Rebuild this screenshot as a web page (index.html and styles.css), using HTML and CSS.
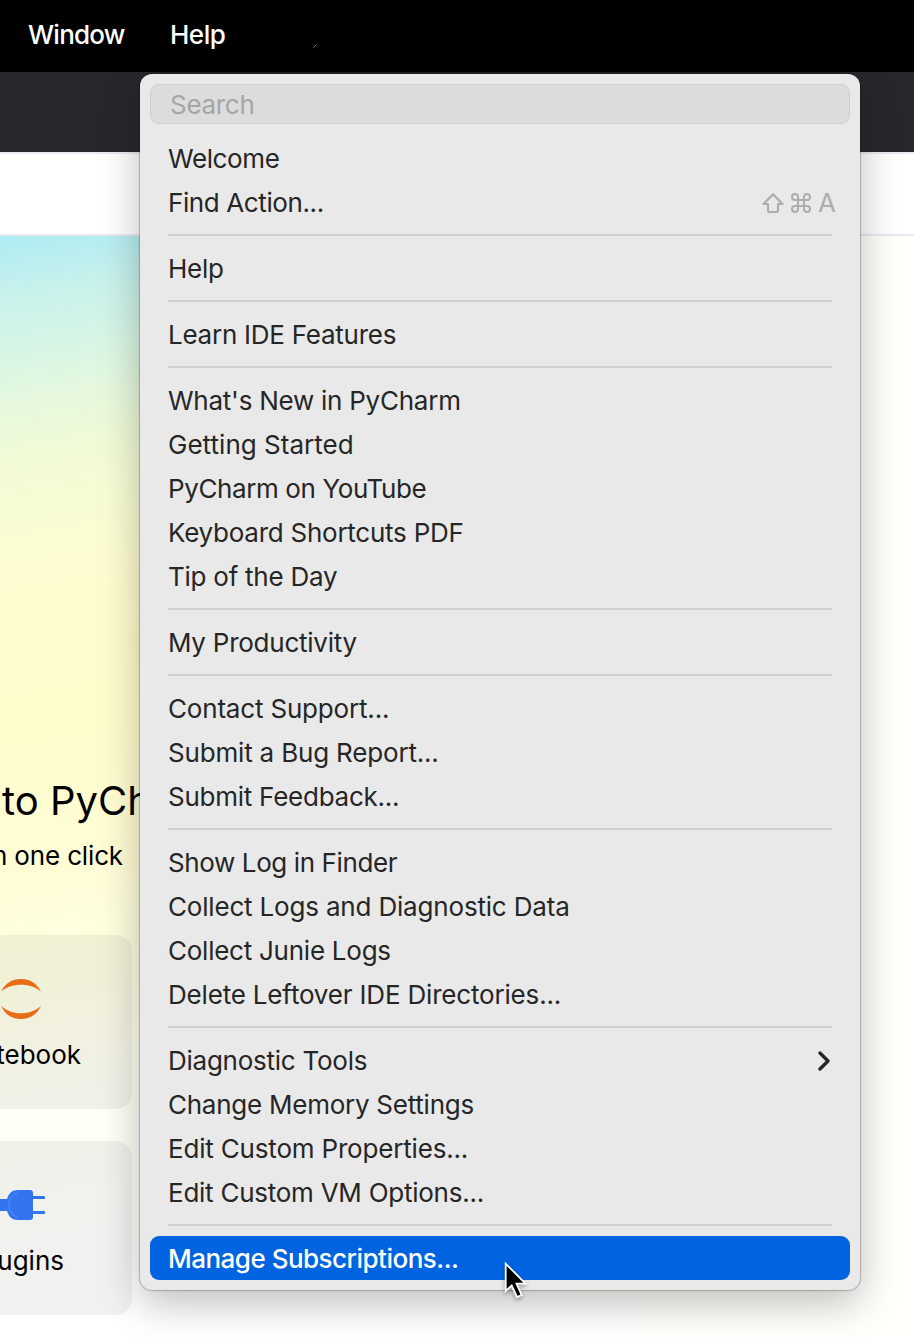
FILE: index.html
```html
<!DOCTYPE html>
<html lang="en">
<head>
<meta charset="utf-8">
<title>PyCharm Help menu</title>
<link rel="stylesheet" href="styles.css">
</head>
<body>
<div class="desktop">
  <header class="menubar">
    <span class="menubar-item window-item">Window</span>
    <span class="menubar-item">Help</span>
    <svg class="speck" width="4" height="4" viewBox="0 0 4 4"><path d="M.5 3.5l3-3" stroke="#999" stroke-width=".8"/></svg>
  </header>
  <div class="titlebar"></div>
  <div class="toolbar"></div>
  <main class="welcome">
    <h1 class="headline">to PyCh</h1>
    <p class="subline">n one click</p>
    <section class="card notebook">
      <svg class="jupyter" width="42" height="42" viewBox="0 0 42 42" fill="#e86c14"><path d="M1 13.700C5 5.500 12 1 21 1s16 4.500 20 12.700C36 9 29 6.700 21 6.700S6 9 1 13.700z"/><path d="M1 27.700C6 32.500 13 35.300 21 35.300S36 32.500 41 27.700C37 36.500 30 41 21 41S5 36.500 1 27.700z"/></svg>
      <span class="card-label">tebook</span>
    </section>
    <section class="card plugins">
      <svg class="plug" width="45" height="30" viewBox="0 0 45 30"><path fill="#3574f0" d="M0 9h7C9 3 12 0 18 0h12c2 0 3 1 3 3v3h10.700a1.300 1.300 0 0 1 0 3H33v12h10.700a1.300 1.300 0 0 1 0 3H33v3c0 2-1 3-3 3H18C12 30 9 27 7 21H0z"/><path fill="none" stroke="#6f9cf5" stroke-width=".6" d="M17.500 3C6 6 6 24 17.500 27"/></svg>
      <span class="card-label">ugins</span>
    </section>
  </main>
  <nav class="menu">
    <div class="search">Search</div>
    <div class="item tight">Welcome</div>
    <div class="item tight"><span>Find Action...</span>
      <span class="keys">
        <svg width="22" height="20" viewBox="0 0 22 20"><path d="M11 1.300L20.500 11H16v6.500q0 1.500-1.500 1.500h-7Q6 19 6 17.500V11H1.500z" fill="none" stroke="#adadad" stroke-width="2.200" stroke-linejoin="round"/></svg>
        <svg width="20" height="20" viewBox="0 0 20 20"><path d="M7 7V4a3 3 0 1 0-3 3h12a3 3 0 1 0-3-3v12a3 3 0 1 0 3-3H4a3 3 0 1 0 3 3z" fill="none" stroke="#adadad" stroke-width="2"/></svg>
        <span class="key-a">A</span>
      </span>
    </div>
    <hr class="rule">
    <div class="item">Help</div>
    <hr class="rule">
    <div class="item">Learn IDE Features</div>
    <hr class="rule">
    <div class="item">What's New in PyCharm</div>
    <div class="item loose">Getting Started</div>
    <div class="item tight">PyCharm on YouTube</div>
    <div class="item">Keyboard Shortcuts PDF</div>
    <div class="item">Tip of the Day</div>
    <hr class="rule">
    <div class="item">My Productivity</div>
    <hr class="rule">
    <div class="item wide">Contact Support...</div>
    <div class="item wide">Submit a Bug Report...</div>
    <div class="item">Submit Feedback...</div>
    <hr class="rule">
    <div class="item tight">Show Log in Finder</div>
    <div class="item wide">Collect Logs and Diagnostic Data</div>
    <div class="item">Collect Junie Logs</div>
    <div class="item wide">Delete Leftover IDE Directories...</div>
    <hr class="rule">
    <div class="item"><span>Diagnostic Tools</span>
      <svg class="chevron" width="12" height="20" viewBox="0 0 12 20"><path d="M2 2l8 8-8 8" fill="none" stroke="#262626" stroke-width="3.300" stroke-linecap="round" stroke-linejoin="round"/></svg>
    </div>
    <div class="item">Change Memory Settings</div>
    <div class="item wide">Edit Custom Properties...</div>
    <div class="item">Edit Custom VM Options...</div>
    <hr class="rule">
    <div class="item selected">Manage Subscriptions...</div>
  </nav>
  <svg class="cursor" width="30" height="44" viewBox="0 0 30 44"><path d="M4.700 3.700v27.300l6-5.500 5.300 11.500 4.700-2-5.200-11.300h9z" fill="#000" stroke="#fff" stroke-width="1.800"/></svg>
</div>
</body>
</html>
```
FILE: styles.css
```css
* { box-sizing: border-box; }
body { margin: 0; font-family: Inter, "Liberation Sans", sans-serif; font-size: 26px; }
.desktop { position: relative; width: 914px; height: 1338px; overflow: hidden; background: #fff; }
.menubar { display: flex; height: 72px; padding-left: 28px; background: #000; color: #fff; font-weight: 500; line-height: 70px; letter-spacing: -.5px; }
.window-item { width: 142px; letter-spacing: -.75px; }
.speck { margin: 44px 0 0 88px; }
.titlebar { height: 80px; background: #27282e; }
.toolbar { height: 84px; background: linear-gradient(#e9e9f1, #e9e9f1) top / 100% 2px no-repeat, #fff; border-bottom: 2px solid #e9e9ef; }
.welcome { height: 1102px; padding-top: 539px; background: linear-gradient(90deg, transparent 200px, #fffffc 700px), linear-gradient(171deg, #aeebf3 0, #c8f2ec 5%, #e0f7e0 12%, #eefad8 17%, #f7fcd3 22%, #fffccf 29%, #fffdcc 40%, #fffdd3 49%, #fffedd 56%, #fffff5 70%, #fff 87%); }
.headline { margin: 0 0 0 2px; width: 148px; white-space: nowrap; font-size: 40px; font-weight: 400; line-height: 52px; }
.subline { display: flex; justify-content: flex-end; width: 123px; margin: 12px 0 0; line-height: 34px; white-space: nowrap; letter-spacing: -.15px; }
.card { width: 132px; height: 174px; border-radius: 0 16px 16px 0; background: rgba(40,40,60,.065); }
.notebook { margin-top: 62px; padding-top: 43px; }
.plugins { margin-top: 32px; padding-top: 49px; }
.jupyter, .plug { display: block; }
.card-label { display: flex; justify-content: flex-end; line-height: 34px; white-space: nowrap; }
.notebook .card-label { width: 81px; margin-top: 18px; }
.plugins .card-label { width: 64px; margin-top: 24px; }
.menu { position: absolute; left: 140px; top: 74px; width: 720px; height: 1216px; padding: 10px; border-radius: 12px; background: #e9e9e9; color: #262626; box-shadow: 0 0 1px 1px rgba(0,0,0,.23), 0 12px 40px rgba(0,0,0,.27); }
.search { height: 40px; margin-bottom: 12px; padding-left: 19px; border: 1px solid #d0d0d0; border-radius: 9px; background: #dcdcdc; color: #a5a5a5; line-height: 40px; letter-spacing: -.3px; }
.item { display: flex; align-items: center; justify-content: space-between; height: 44px; padding: 2px 15px 0 18px; white-space: nowrap; line-height: 42px; letter-spacing: -.25px; }
.tight { letter-spacing: -.39px; }
.wide { letter-spacing: -.18px; }
.loose { letter-spacing: .03px; }
.rule { height: 2px; margin: 10px 18px; border: 0; background: #d0d0d0; }
.selected { border-radius: 9px; background: #0064e1; color: #fff; font-weight: 500; letter-spacing: -.51px; }
.keys { display: flex; align-items: center; gap: 7px; color: #adadad; }
.key-a { width: 17px; }
.chevron { margin-right: 5px; }
.cursor { position: absolute; left: 501px; top: 1260px; filter: drop-shadow(0 2px 2px rgba(0,0,0,.35)); }
```
